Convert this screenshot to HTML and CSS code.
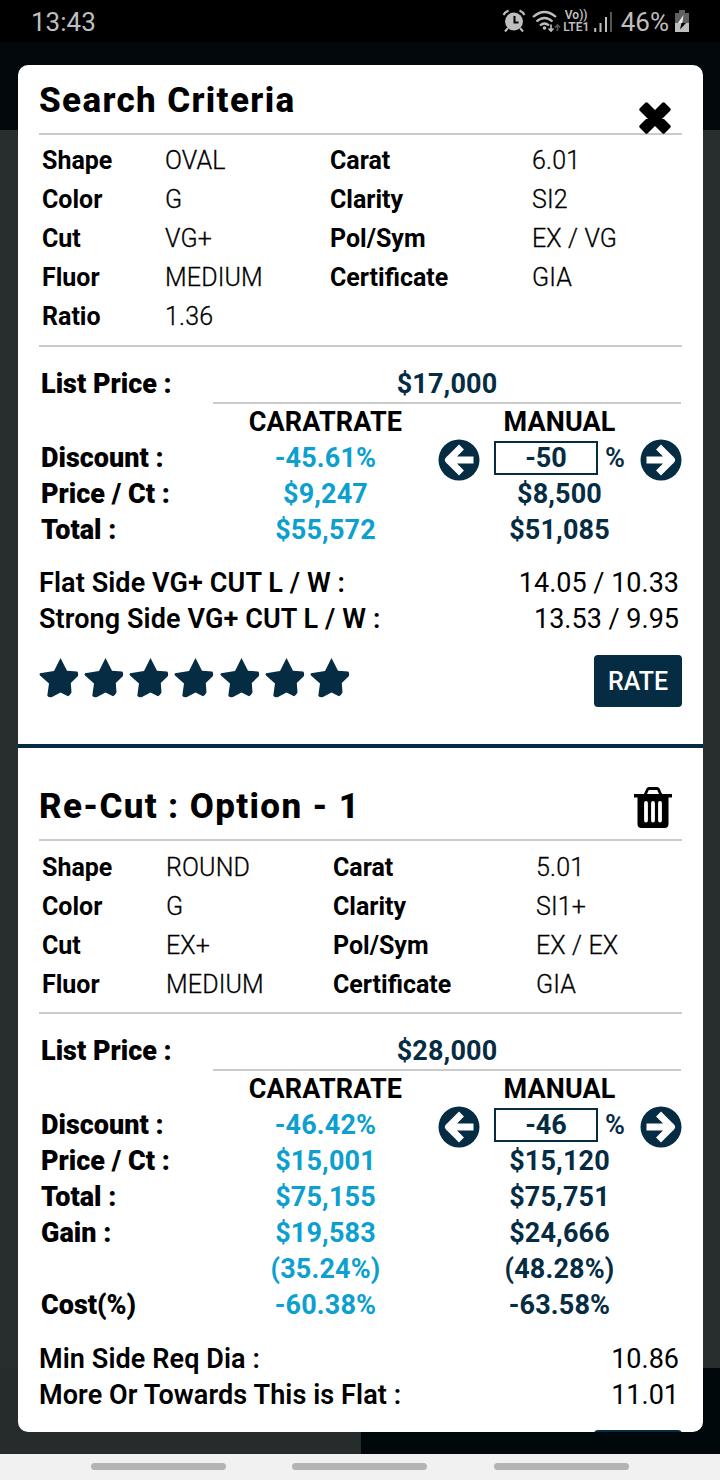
FILE: index.html
```html
<!DOCTYPE html>
<html lang="en">
<head>
  <meta charset="utf-8">
  <title>Search Criteria</title>
  <link rel="stylesheet" href="styles.css">
</head>
<body>
  <svg class="sprite" width="0" height="0">
    <symbol id="arrow-left" viewBox="0 0 42 42">
      <circle cx="21" cy="21" r="20.5" fill="#052c43"/>
      <path d="M21 10.500 10.500 21 21 31.500M12 21H32" fill="none" stroke="#fff" stroke-width="7" stroke-linejoin="round" stroke-linecap="square"/>
    </symbol>
    <symbol id="arrow-right" viewBox="0 0 42 42">
      <circle cx="21" cy="21" r="20.5" fill="#052c43"/>
      <path d="M21 10.500 31.500 21 21 31.500M30 21H10" fill="none" stroke="#fff" stroke-width="7" stroke-linejoin="round" stroke-linecap="square"/>
    </symbol>
    <symbol id="star" viewBox="0 0 40 41">
      <path d="M21.500 1 28 13.800 38 14.500Q39.500 15 39 19L31.800 26 32.500 35.500Q30.500 39 29 39.300L21.500 35.500 13 40Q9 41 8.300 38.500L10 26.500 1 18.500Q0 17 1 16.300L15 14Z" fill="#052c43"/>
    </symbol>
  </svg>

  <div class="status-bar">
    <span class="time">13:43</span>
    <div class="status-icons">
      <svg class="alarm" width="24" height="24" viewBox="0 0 24 24">
        <circle cx="12" cy="12.500" r="9" fill="#bebebe"/>
        <path d="M12.500 7V13.500H16.500" fill="none" stroke="#000" stroke-width="2"/>
        <path d="M1.500 6Q3 3 6.500 1.500M17.500 1.500Q21 3 22.500 6M6 19 3 22.500M18 19 21 22.500" fill="none" stroke="#bebebe" stroke-width="2"/>
      </svg>
      <svg class="wifi" width="29" height="24" viewBox="0 0 29 24">
        <path d="M1 7Q12.500-3 24 7M4.500 11.500Q12.500 4.500 20.500 11.500M8 15.500Q12.500 11.500 17 15.500" fill="none" stroke="#bebebe" stroke-width="2.300"/>
        <circle cx="12.500" cy="18" r="1.800" fill="#bebebe"/>
        <path d="M19 14.500V21M16.500 18.500 19 21 21.500 18.500" fill="none" stroke="#bebebe" stroke-width="1.700"/>
        <path d="M25.500 21V15M23 17.500 25.500 15 28 17.500" fill="none" stroke="#555" stroke-width="1.700"/>
      </svg>
      <div class="volte"><span>Vo))</span><span>LTE1</span></div>
      <svg class="signal" width="18" height="22" viewBox="0 0 18 22">
        <path d="M1.200 21V17M6.500 21V12M12 21V6" stroke="#bebebe" stroke-width="2"/>
        <path d="M17 21V1" stroke="#555" stroke-width="2"/>
      </svg>
      <span class="percent">46%</span>
      <svg class="battery" width="14" height="22" viewBox="0 0 14 22">
        <path d="M0 3H4V0H10V3H14V13H0Z" fill="#606060"/>
        <path d="M0 13H14V22H0Z" fill="#bebebe"/>
        <path d="M8.500 5 3 13H6.500L8 11.500H11L7.500 11.500Z" fill="#eee"/>
        <path d="M6.500 13H11L5 19.500Z" fill="#000"/>
      </svg>
    </div>
  </div>

  <div class="page">
    <div class="page-header"></div>
    <div class="page-body"></div>
    <div class="page-footer"><div></div><div></div></div>

    <div class="modal">
      <section class="result">
        <div class="title-row">
          <h2>Search Criteria</h2>
          <svg class="close" width="34" height="34" viewBox="-1 -1 34 34">
            <path d="M7.500 2 16 10.500 24.500 2 30 7.500 21.500 16 30 24.500 24.500 30 16 21.500 7.500 30 2 24.500 10.500 16 2 7.500Z" stroke="#000" stroke-width="3.500" stroke-linejoin="round"/>
          </svg>
        </div>
        <div class="criteria">
          <b>Shape</b><span>OVAL</span><b>Carat</b><span>6.01</span>
          <b>Color</b><span>G</span><b>Clarity</b><span>SI2</span>
          <b>Cut</b><span>VG+</span><b>Pol/Sym</b><span>EX / VG</span>
          <b>Fluor</b><span>MEDIUM</span><b>Certificate</b><span>GIA</span>
          <b>Ratio</b><span>1.36</span>
        </div>
        <div class="prices">
          <div class="list-price"><b>List Price :</b><span>$17,000</span></div>
          <div class="price-row heads"><b></b><span>CARATRATE</span><span>MANUAL</span></div>
          <div class="price-row">
            <b>Discount :</b><span class="rate">-45.61%</span>
            <div class="stepper">
              <svg width="42" height="42"><use href="#arrow-left"/></svg>
              <div class="field">-50</div><span class="unit">%</span>
              <svg width="42" height="42"><use href="#arrow-right"/></svg>
            </div>
          </div>
          <div class="price-row"><b>Price / Ct :</b><span class="rate">$9,247</span><span>$8,500</span></div>
          <div class="price-row"><b>Total :</b><span class="rate">$55,572</span><span>$51,085</span></div>
        </div>
        <div class="measures">
          <div><b>Flat Side VG+ CUT L / W :</b><span>14.05 / 10.33</span></div>
          <div><b>Strong Side VG+ CUT L / W :</b><span>13.53 / 9.95</span></div>
        </div>
        <div class="rating">
          <div class="stars">
            <svg width="40" height="41"><use href="#star"/></svg>
            <svg width="40" height="41"><use href="#star"/></svg>
            <svg width="40" height="41"><use href="#star"/></svg>
            <svg width="40" height="41"><use href="#star"/></svg>
            <svg width="40" height="41"><use href="#star"/></svg>
            <svg width="40" height="41"><use href="#star"/></svg>
            <svg width="40" height="41"><use href="#star"/></svg>
          </div>
          <div class="rate-btn">RATE</div>
        </div>
      </section>

      <section class="result recut">
        <div class="title-row">
          <h2>Re-Cut : Option - 1</h2>
          <svg class="trash" width="38" height="42" viewBox="0 0 38 42">
            <path d="M11 8 13.500 2.500Q14 1.500 15 1.500H23Q24 1.500 24.500 2.500L27 8" fill="none" stroke="#000" stroke-width="2.800"/>
            <path d="M0 7H38V10.500H34.500V37Q34.500 41 30.500 41H7.500Q3.500 41 3.500 37V10.500H0Z"/>
            <path d="M12 16V33.500M19 16V33.500M26 16V33.500" stroke="#fff" stroke-width="3.800" stroke-linecap="round"/>
          </svg>
        </div>
        <div class="criteria">
          <b>Shape</b><span>ROUND</span><b>Carat</b><span>5.01</span>
          <b>Color</b><span>G</span><b>Clarity</b><span>SI1+</span>
          <b>Cut</b><span>EX+</span><b>Pol/Sym</b><span>EX / EX</span>
          <b>Fluor</b><span>MEDIUM</span><b>Certificate</b><span>GIA</span>
        </div>
        <div class="prices">
          <div class="list-price"><b>List Price :</b><span>$28,000</span></div>
          <div class="price-row heads"><b></b><span>CARATRATE</span><span>MANUAL</span></div>
          <div class="price-row">
            <b>Discount :</b><span class="rate">-46.42%</span>
            <div class="stepper">
              <svg width="42" height="42"><use href="#arrow-left"/></svg>
              <div class="field">-46</div><span class="unit">%</span>
              <svg width="42" height="42"><use href="#arrow-right"/></svg>
            </div>
          </div>
          <div class="price-row"><b>Price / Ct :</b><span class="rate">$15,001</span><span>$15,120</span></div>
          <div class="price-row"><b>Total :</b><span class="rate">$75,155</span><span>$75,751</span></div>
          <div class="price-row"><b>Gain :</b><span class="rate">$19,583</span><span>$24,666</span></div>
          <div class="price-row"><b></b><span class="rate">(35.24%)</span><span>(48.28%)</span></div>
          <div class="price-row"><b>Cost(%)</b><span class="rate">-60.38%</span><span>-63.58%</span></div>
        </div>
        <div class="measures">
          <div><b>Min Side Req Dia :</b><span>10.86</span></div>
          <div><b>More Or Towards This is Flat :</b><span>11.01</span></div>
        </div>
        <div class="rating">
          <div class="stars"></div>
          <div class="rate-btn"></div>
        </div>
      </section>
    </div>
  </div>

  <div class="nav-bar"><i></i><i></i><i></i></div>
</body>
</html>
```
FILE: styles.css
```css
* {
  box-sizing: border-box;
}

body {
  margin: 0;
  width: 720px;
  height: 1480px;
  display: flex;
  flex-direction: column;
  overflow: hidden;
  font-family: Roboto, sans-serif;
  font-size: 27px;
  color: #000;
  background: #000;
}

.sprite {
  position: absolute;
}

svg {
  display: block;
  flex: none;
}

/* phone status bar */
.status-bar {
  height: 42px;
  flex: none;
  display: flex;
  justify-content: space-between;
  padding: 2px 31px 0 31px;
  font-size: 26px;
  line-height: 40px;
  color: #bebebe;
}

.status-icons {
  display: flex;
  align-items: center;
}

.alarm {
  margin-top: -3px;
}

.wifi {
  margin: -1px 0 0 6px;
}

.volte {
  width: 27px;
  margin: -2px 0 0 2px;
  font-size: 12px;
  line-height: 12px;
  font-weight: 600;
  display: flex;
  flex-direction: column;
  align-items: center;
}

.signal {
  margin: -1px 0 0 4px;
}

.percent {
  margin-left: 9px;
}

.battery {
  margin: -3px 0 0 6px;
}

/* dimmed page behind the modal */
.page {
  flex: 1;
  position: relative;
  display: flex;
  flex-direction: column;
}

.page-header {
  height: 88px;
  background: #02080b;
}

.page-body {
  flex: 1;
  background: #282d2e;
}

.page-footer {
  height: 86px;
  display: grid;
  grid-template-columns: 361px 1fr;
}

.page-footer div {
  background: #262b2b;
}

.page-footer div + div {
  background: #00080b;
}

.modal {
  position: absolute;
  top: 23px;
  left: 18px;
  width: 685px;
  height: 1367px;
  overflow: hidden;
  background: #fff;
  border-radius: 10px;
}

.result {
  padding: 2px 21px 0;
}

.recut {
  margin-top: 37px;
  padding-top: 25px;
  border-top: 4px solid #052c43;
}

.title-row {
  height: 68px;
  display: flex;
  justify-content: space-between;
  border-bottom: 2px solid #cbcbcb;
}

h2 {
  margin: 0;
  font-size: 35px;
  font-weight: 800;
  line-height: 67px;
  letter-spacing: 1.35px;
}

.close {
  margin: 34px 10px 0 0;
}

.trash {
  margin: 14px 10px 0 0;
}

.criteria {
  display: grid;
  grid-template-columns: 123px 165px 202px 1fr;
  padding: 6px 3px 9px;
  font-size: 25px;
  line-height: 39px;
  border-bottom: 2px solid #cbcbcb;
}

.recut .criteria {
  grid-template-columns: 124px 167px 203px 1fr;
  padding: 7px 3px 8px;
}

.criteria span {
  font-weight: 300;
  letter-spacing: 0.15px;
  -webkit-text-stroke: 0.3px #000;
}

.prices {
  padding: 19px 1px 0 2px;
  line-height: 36px;
  font-weight: 700;
}

.list-price {
  height: 38px;
  display: flex;
}

.list-price b {
  width: 172px;
  line-height: 37px;
}

.list-price span {
  flex: 1;
  text-align: center;
  color: #052c43;
  border-bottom: 2px solid #cbcbcb;
}

.price-row {
  height: 36px;
  display: grid;
  grid-template-columns: 172px 225px 243px;
  text-align: center;
  color: #052c43;
}

.price-row b {
  text-align: left;
  color: #000;
}

.price-row span,
.list-price span {
  letter-spacing: 0.15px;
}

.heads {
  color: #000;
}

.price-row .rate {
  color: #0d9fce;
}

.stepper {
  display: flex;
  align-items: center;
  height: 42px;
  margin: -1px 0 0;
}

.field {
  flex: none;
  width: 104px;
  height: 34px;
  margin: -4px 0 0 14px;
  border: 2px solid #052c43;
  line-height: 30px;
}

.unit {
  flex: none;
  width: 42px;
  margin-top: -4px;
  padding-left: 7px;
  text-align: left;
  font-weight: 600;
}

.measures {
  padding: 17px 3px 0 0;
  line-height: 36px;
}

.recut .measures {
  padding-top: 18px;
}

.measures div {
  display: flex;
  justify-content: space-between;
}

.measures b {
  font-weight: 600;
  letter-spacing: 0.1px;
}

.rating {
  display: flex;
  justify-content: space-between;
  padding-top: 18px;
}

.recut .rating {
  padding-top: 17px;
}

.stars {
  display: flex;
  gap: 5.15px;
  padding-top: 2px;
}

.rate-btn {
  width: 88px;
  height: 52px;
  border-radius: 4px;
  background: #052c43;
  color: #fff;
  font-size: 25px;
  font-weight: 500;
  line-height: 54px;
  text-align: center;
}

/* phone navigation */
.nav-bar {
  height: 26px;
  flex: none;
  display: flex;
  gap: 66.4px;
  padding: 9px 0 0 91px;
  background: #f1f1f1;
}

.nav-bar i {
  width: 135px;
  height: 7px;
  border-radius: 4px;
  background: #b4b4b4;
}
```
